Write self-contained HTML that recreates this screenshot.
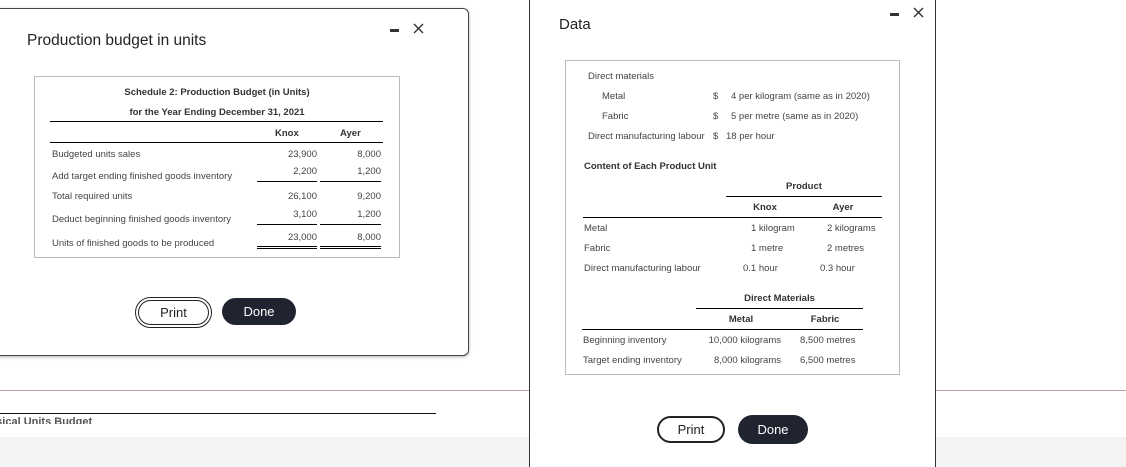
<!DOCTYPE html>
<html><head><meta charset="utf-8"><style>
*{margin:0;padding:0;box-sizing:border-box}
html,body{width:1126px;height:467px;overflow:hidden}
body{background:#fff;position:relative;font-family:"Liberation Sans",Arial,sans-serif;color:#333}
.a{position:absolute;white-space:nowrap}
.t{font-size:9.5px;color:#444}
.b{font-weight:bold;color:#333}
.r{text-align:right}
.c{text-align:center}
.hl{position:absolute;height:1px;background:#000}
.btnP{position:absolute;border:2px solid #222;border-radius:16px;background:#fff;font-size:13px;color:#222;text-align:center}
.btnD{position:absolute;background:#1f2430;border-radius:16px;color:#fff;font-size:13px;text-align:center}
</style></head><body>
<div class="hl" style="left:0;top:390px;width:1126px;background:#c9a0ad"></div>
<div class="hl" style="left:0;top:413px;width:436px;background:#111"></div>
<div class="a" style="left:-24px;top:416px;height:8px;overflow:hidden;font-size:11px;font-weight:bold;color:#555">Physical Units Budget</div>
<div style="position:absolute;left:0;top:437px;width:1126px;height:30px;background:#f3f3f3"></div>

<div style="position:absolute;left:-10px;top:8px;width:479px;height:348px;border:1px solid #444;border-radius:6px;background:#fff;box-shadow:0 1px 3px rgba(0,0,0,.3)"></div>
<div class="a" style="left:27px;top:32px;font-size:15.5px;color:#222">Production budget in units</div>
<div class="a" style="left:390px;top:29px;width:9px;height:3px;background:#333"></div>
<svg class="a" style="left:413px;top:23px" width="11" height="11"><path d="M1 1L10 10M10 1L1 10" stroke="#333" stroke-width="1.4"/></svg>
<div style="position:absolute;left:34px;top:76px;width:366px;height:182px;border:1px solid #bbb"></div>
<div class="a t b c" style="left:50px;width:334px;top:87px">Schedule 2: Production Budget (in Units)</div>
<div class="a t b c" style="left:50px;width:334px;top:107px">for the Year Ending December 31, 2021</div>
<div class="hl" style="left:50px;top:121px;width:333px"></div>
<div class="a t b" style="left:275px;top:128px">Knox</div>
<div class="a t b" style="left:340px;top:128px">Ayer</div>
<div class="hl" style="left:50px;top:142px;width:333px"></div>
<div class="a t" style="left:52px;top:149px">Budgeted units sales</div>
<div class="a t r" style="left:257px;width:60px;top:149px">23,900</div>
<div class="a t r" style="left:321px;width:60px;top:149px">8,000</div>
<div class="a t" style="left:52px;top:171px">Add target ending finished goods inventory</div>
<div class="a t r" style="left:257px;width:60px;top:166px">2,200</div>
<div class="a t r" style="left:321px;width:60px;top:166px">1,200</div>
<div class="hl" style="left:257px;top:181px;width:60px"></div>
<div class="hl" style="left:320px;top:181px;width:61px"></div>
<div class="a t" style="left:52px;top:191px">Total required units</div>
<div class="a t r" style="left:257px;width:60px;top:191px">26,100</div>
<div class="a t r" style="left:321px;width:60px;top:191px">9,200</div>
<div class="a t" style="left:52px;top:214px">Deduct beginning finished goods inventory</div>
<div class="a t r" style="left:257px;width:60px;top:209px">3,100</div>
<div class="a t r" style="left:321px;width:60px;top:209px">1,200</div>
<div class="hl" style="left:257px;top:224px;width:60px"></div>
<div class="hl" style="left:320px;top:224px;width:61px"></div>
<div class="a t" style="left:52px;top:238px">Units of finished goods to be produced</div>
<div class="a t r" style="left:257px;width:60px;top:232px">23,000</div>
<div class="a t r" style="left:321px;width:60px;top:232px">8,000</div>
<div class="hl" style="left:257px;top:246px;width:60px"></div>
<div class="hl" style="left:257px;top:248px;width:60px"></div>
<div class="hl" style="left:320px;top:246px;width:61px"></div>
<div class="hl" style="left:320px;top:248px;width:61px"></div>
<div class="btnP" style="left:135px;top:297px;width:77px;height:31px;border:4px double #222;line-height:23px">Print</div>
<div class="btnD" style="left:222px;top:298px;width:74px;height:27px;line-height:27px">Done</div>

<div style="position:absolute;left:529px;top:-10px;width:407px;height:490px;border:1px solid #333;background:#fff"></div>
<div class="a" style="left:559px;top:16px;font-size:15px;color:#222">Data</div>
<div class="a" style="left:890px;top:13px;width:9px;height:3px;background:#333"></div>
<svg class="a" style="left:913px;top:7px" width="11" height="11"><path d="M1 1L10 10M10 1L1 10" stroke="#333" stroke-width="1.4"/></svg>
<div style="position:absolute;left:565px;top:60px;width:335px;height:315px;border:1px solid #bbb"></div>
<div class="a t" style="left:588px;top:71px">Direct materials</div>
<div class="a t" style="left:602px;top:91px">Metal</div>
<div class="a t" style="left:713px;top:91px">$</div>
<div class="a t" style="left:731px;top:91px">4 per kilogram (same as in 2020)</div>
<div class="a t" style="left:602px;top:111px">Fabric</div>
<div class="a t" style="left:713px;top:111px">$</div>
<div class="a t" style="left:731px;top:111px">5 per metre (same as in 2020)</div>
<div class="a t" style="left:588px;top:131px">Direct manufacturing labour</div>
<div class="a t" style="left:713px;top:131px">$</div>
<div class="a t" style="left:726px;top:131px">18 per hour</div>
<div class="a t b" style="left:584px;top:161px">Content of Each Product Unit</div>
<div class="a t b c" style="left:726px;width:156px;top:181px">Product</div>
<div class="hl" style="left:726px;top:196px;width:156px"></div>
<div class="a t b c" style="left:735px;width:60px;top:202px">Knox</div>
<div class="a t b c" style="left:813px;width:60px;top:202px">Ayer</div>
<div class="hl" style="left:583px;top:217px;width:299px"></div>
<div class="a t" style="left:584px;top:223px">Metal</div>
<div class="a t" style="left:751px;top:223px">1 kilogram</div>
<div class="a t" style="left:827px;top:223px">2 kilograms</div>
<div class="a t" style="left:584px;top:243px">Fabric</div>
<div class="a t" style="left:751px;top:243px">1 metre</div>
<div class="a t" style="left:827px;top:243px">2 metres</div>
<div class="a t" style="left:584px;top:263px">Direct manufacturing labour</div>
<div class="a t" style="left:743px;top:263px">0.1 hour</div>
<div class="a t" style="left:820px;top:263px">0.3 hour</div>
<div class="a t b c" style="left:696px;width:167px;top:293px">Direct Materials</div>
<div class="hl" style="left:696px;top:308px;width:167px"></div>
<div class="a t b c" style="left:711px;width:60px;top:314px">Metal</div>
<div class="a t b c" style="left:795px;width:60px;top:314px">Fabric</div>
<div class="hl" style="left:582px;top:329px;width:281px"></div>
<div class="a t" style="left:583px;top:335px">Beginning inventory</div>
<div class="a t r" style="left:700px;width:81px;top:335px">10,000 kilograms</div>
<div class="a t" style="left:800px;top:335px">8,500 metres</div>
<div class="a t" style="left:583px;top:355px">Target ending inventory</div>
<div class="a t r" style="left:700px;width:81px;top:355px">8,000 kilograms</div>
<div class="a t" style="left:800px;top:355px">6,500 metres</div>
<div class="btnP" style="left:657px;top:416px;width:68px;height:27px;line-height:23px">Print</div>
<div class="btnD" style="left:738px;top:415px;width:70px;height:29px;line-height:29px">Done</div>
</body></html>
